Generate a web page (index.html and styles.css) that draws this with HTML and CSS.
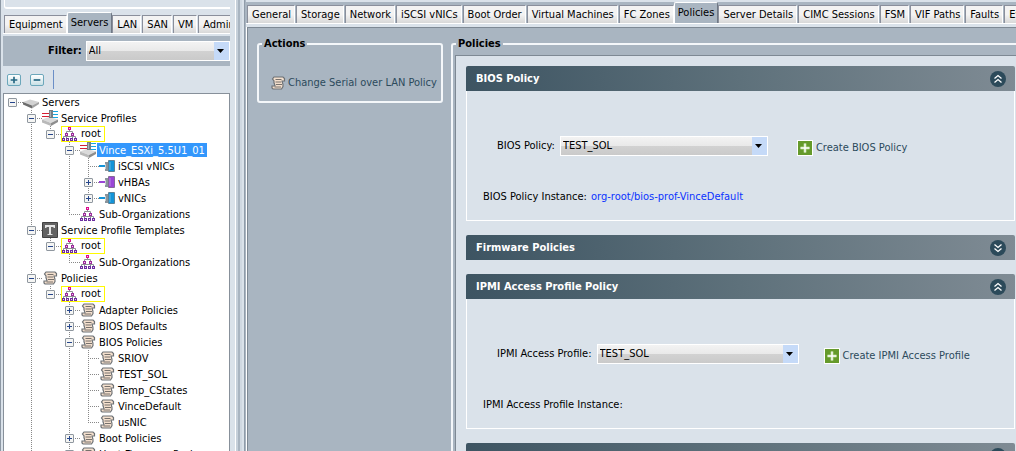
FILE: index.html
```html
<!DOCTYPE html>
<html lang="en">
<head>
<meta charset="utf-8">
<title>Servers - Policies</title>
<link rel="stylesheet" href="styles.css">
</head>
<body>
<svg class="defs" aria-hidden="true">
  <symbol id="scroll" viewBox="0 0 16 16">
    <path d="M4 2H13L14.500 3.500V6H12C12 7.500 13.500 8.500 13 11.500L11.500 14H3L2 13V11H5C5 9.500 3.500 8.500 4 6L2.500 4Z" fill="#f3dfcd" stroke="#6d7175" stroke-width="1.200"/>
    <path d="M5.500 4.500H11.500M5.500 7H11M6 9.500H12M4.500 12H11" stroke="#77716c" stroke-width="1" fill="none"/>
  </symbol>
  <symbol id="org" viewBox="0 0 16 16">
    <path d="M7.500 4V5.500M4.500 7V5.500H10.500V7M1.500 12V10.500H13.500V12M4.500 9V12M10.500 9V12" stroke="#8d9095" fill="none"/>
    <path d="M6 1h3v3H6z" fill="#d80f8c"/>
    <path d="M3 7h3v3H3zM9 7h3v3H9z" fill="#9c2c9c"/>
    <path d="M0 12h3v3H0zM4 12h3v3H4zM8 12h3v3H8zM12 12h3v3h-3z" fill="#6b2fa0"/>
    <path d="M7 2h1v1H7zM4 8h1v1H4zM10 8h1v1h-1zM1 13h1v1H1zM5 13h1v1H5zM9 13h1v1H9zM13 13h1v1h-1z" fill="#f3c6ee"/>
  </symbol>
  <symbol id="server" viewBox="0 0 16 16">
    <path d="M0 8L7 5.500L16 8L9 11.500Z" fill="#d2d2d2"/>
    <path d="M0 8L9 11.500V14.500L0 10.500Z" fill="#6d6d6d"/>
    <path d="M9 11.500L16 8V10L9 14.500Z" fill="#a2a2a2"/>
  </symbol>
  <symbol id="profile" viewBox="0 0 16 16">
    <path d="M0 9.500L7 7L16 9.500L9 13Z" fill="#dadada"/>
    <path d="M0 9.500L9 13V16L0 12.500Z" fill="#b9b9b9"/>
    <path d="M9 13L16 9.500V12L9 16Z" fill="#8d8d8d"/>
    <path d="M0 3.500H7M0 6.500H7" stroke="#d61f34"/>
    <path d="M10 1.500H16M10 4.500H16M10 7.500H16" stroke="#17a6e0"/>
    <path d="M7 0h4v8H7z" fill="#777e84"/><path d="M8 1h1v6H8z" fill="#a9afb3"/>
  </symbol>
  <symbol id="nic" viewBox="0 0 16 16">
    <path d="M0 8H6" stroke="currentColor" stroke-width="2"/>
    <path d="M6 4h3v9H6z" fill="#8b949b"/><path d="M6 6h1v5H6z" fill="#c5cacd"/>
    <path d="M9.500 2.500H15.500V13.500H9.500Z" fill="currentColor" stroke="#000" stroke-opacity=".35"/>
    <path d="M11 4v8" stroke="#fff" stroke-opacity=".35"/>
  </symbol>
  <symbol id="template" viewBox="0 0 16 16">
    <path d="M.5.5h15v15H.5z" fill="#636363" stroke="#424242"/>
    <path d="M3 3h10v3h-1.500V5H9v7h1.500v1h-5v-1H7V5H4.500v1H3z" fill="#e6e6e6"/>
  </symbol>
  <symbol id="up" viewBox="0 0 16 16">
    <circle cx="8" cy="8" r="8" fill="#2c4a5a"/>
    <path d="M4.500 7.500L8 4.500L11.500 7.500M4.500 11.500L8 8.500L11.500 11.500" fill="none" stroke="#fff" stroke-width="1.300"/>
  </symbol>
  <symbol id="down" viewBox="0 0 16 16">
    <circle cx="8" cy="8" r="8" fill="#2c4a5a"/>
    <path d="M4.500 4.500L8 7.500L11.500 4.500M4.500 8.500L8 11.500L11.500 8.500" fill="none" stroke="#fff" stroke-width="1.300"/>
  </symbol>
  <symbol id="add" viewBox="0 0 16 16">
    <path d="M0 0h16v16H0z" fill="#fff"/><path d="M1 1h14v14H1z" fill="#659a2b"/>
    <path d="M8 3.500V12.500M3.500 8H12.500" stroke="#a6cc7c" stroke-width="3"/>
    <path d="M8 3.500V12.500M3.500 8H12.500" stroke="#fff" stroke-width="1.400"/>
  </symbol>
</svg>

<div class="app">
  <aside class="sidebar">
    <div class="summary"></div>
    <nav class="tabs side-tabs">
      <button class="tab">Equipment</button>
      <button class="tab active">Servers</button>
      <button class="tab">LAN</button>
      <button class="tab">SAN</button>
      <button class="tab">VM</button>
      <button class="tab">Admin</button>
    </nav>
    <div class="filter">
      <label for="filter">Filter:</label>
      <select id="filter"><option>All</option></select>
    </div>
    <div class="toolbar">
      <button class="tool" aria-label="Expand all"><svg viewBox="0 0 14 12"><path d="M7 2v8M3 6h8" stroke="#266783" stroke-width="2"/></svg></button>
      <button class="tool" aria-label="Collapse all"><svg viewBox="0 0 14 12"><path d="M3 6h8" stroke="#266783" stroke-width="2"/></svg></button>
      <span class="divider"></span>
    </div>
    <div class="tree">
      <ul>
        <li><div class="row"><button class="toggle" aria-label="Collapse"></button><svg class="icon"><use href="#server"/></svg><span class="name">Servers</span></div>
          <ul>
            <li><div class="row"><button class="toggle" aria-label="Collapse"></button><svg class="icon"><use href="#profile"/></svg><span class="name">Service Profiles</span></div>
              <ul>
                <li><div class="row"><button class="toggle" aria-label="Collapse"></button><span class="root"><svg class="icon"><use href="#org"/></svg>root</span></div>
                  <ul>
                    <li><div class="row"><button class="toggle" aria-label="Collapse"></button><svg class="icon"><use href="#profile"/></svg><span class="name selected">Vince_ESXi_5.5U1_01</span></div>
                      <ul>
                        <li><div class="row leaf"><svg class="icon blue"><use href="#nic"/></svg><span class="name">iSCSI vNICs</span></div></li>
                        <li><div class="row"><button class="toggle plus" aria-label="Expand"></button><svg class="icon purple"><use href="#nic"/></svg><span class="name">vHBAs</span></div></li>
                        <li><div class="row"><button class="toggle plus" aria-label="Expand"></button><svg class="icon blue"><use href="#nic"/></svg><span class="name">vNICs</span></div></li>
                      </ul>
                    </li>
                    <li><div class="row leaf"><svg class="icon"><use href="#org"/></svg><span class="name">Sub-Organizations</span></div></li>
                  </ul>
                </li>
              </ul>
            </li>
            <li><div class="row"><button class="toggle" aria-label="Collapse"></button><svg class="icon"><use href="#template"/></svg><span class="name">Service Profile Templates</span></div>
              <ul>
                <li><div class="row"><button class="toggle" aria-label="Collapse"></button><span class="root"><svg class="icon"><use href="#org"/></svg>root</span></div>
                  <ul>
                    <li><div class="row leaf"><svg class="icon"><use href="#org"/></svg><span class="name">Sub-Organizations</span></div></li>
                  </ul>
                </li>
              </ul>
            </li>
            <li class="more"><div class="row"><button class="toggle" aria-label="Collapse"></button><svg class="icon"><use href="#scroll"/></svg><span class="name">Policies</span></div>
              <ul>
                <li><div class="row"><button class="toggle" aria-label="Collapse"></button><span class="root"><svg class="icon"><use href="#org"/></svg>root</span></div>
                  <ul>
                    <li><div class="row"><button class="toggle plus" aria-label="Expand"></button><svg class="icon"><use href="#scroll"/></svg><span class="name">Adapter Policies</span></div></li>
                    <li><div class="row"><button class="toggle plus" aria-label="Expand"></button><svg class="icon"><use href="#scroll"/></svg><span class="name">BIOS Defaults</span></div></li>
                    <li><div class="row"><button class="toggle" aria-label="Collapse"></button><svg class="icon"><use href="#scroll"/></svg><span class="name">BIOS Policies</span></div>
                      <ul>
                        <li><div class="row leaf"><svg class="icon"><use href="#scroll"/></svg><span class="name">SRIOV</span></div></li>
                        <li><div class="row leaf"><svg class="icon"><use href="#scroll"/></svg><span class="name">TEST_SOL</span></div></li>
                        <li><div class="row leaf"><svg class="icon"><use href="#scroll"/></svg><span class="name">Temp_CStates</span></div></li>
                        <li><div class="row leaf"><svg class="icon"><use href="#scroll"/></svg><span class="name">VinceDefault</span></div></li>
                        <li><div class="row leaf"><svg class="icon"><use href="#scroll"/></svg><span class="name">usNIC</span></div></li>
                      </ul>
                    </li>
                    <li><div class="row"><button class="toggle plus" aria-label="Expand"></button><svg class="icon"><use href="#scroll"/></svg><span class="name">Boot Policies</span></div></li>
                    <li class="more"><div class="row"><button class="toggle plus" aria-label="Expand"></button><svg class="icon"><use href="#scroll"/></svg><span class="name">Host Firmware Packages</span></div></li>
                  </ul>
                </li>
              </ul>
            </li>
          </ul>
        </li>
      </ul>
    </div>
  </aside>
  <div class="splitter"></div>
  <main class="main">
    <nav class="tabs main-tabs">
      <button class="tab">General</button>
      <button class="tab">Storage</button>
      <button class="tab">Network</button>
      <button class="tab">iSCSI vNICs</button>
      <button class="tab">Boot Order</button>
      <button class="tab">Virtual Machines</button>
      <button class="tab">FC Zones</button>
      <button class="tab active">Policies</button>
      <button class="tab">Server Details</button>
      <button class="tab">CIMC Sessions</button>
      <button class="tab">FSM</button>
      <button class="tab">VIF Paths</button>
      <button class="tab">Faults</button>
      <button class="tab">Events</button>
    </nav>
    <div class="content">
      <fieldset class="group actions">
        <legend>Actions</legend>
        <button class="action"><svg class="icon"><use href="#scroll"/></svg>Change Serial over LAN Policy</button>
      </fieldset>
      <fieldset class="group policies">
        <legend>Policies</legend>
        <div class="scroller">
          <section class="panel">
            <h2>BIOS Policy<button class="fold" aria-label="Collapse"><svg><use href="#up"/></svg></button></h2>
            <div class="body">
              <div class="field">
                <label for="bios">BIOS Policy:</label>
                <select id="bios"><option>TEST_SOL</option></select>
                <button class="action create"><svg class="icon"><use href="#add"/></svg>Create BIOS Policy</button>
              </div>
              <div class="instance">BIOS Policy Instance: <a href="#bios">org-root/bios-prof-VinceDefault</a></div>
            </div>
          </section>
          <section class="panel">
            <h2>Firmware Policies<button class="fold" aria-label="Expand"><svg><use href="#down"/></svg></button></h2>
          </section>
          <section class="panel">
            <h2>IPMI Access Profile Policy<button class="fold" aria-label="Collapse"><svg><use href="#up"/></svg></button></h2>
            <div class="body">
              <div class="field compact">
                <label for="ipmi">IPMI Access Profile:</label>
                <select id="ipmi"><option>TEST_SOL</option></select>
                <button class="action create"><svg class="icon"><use href="#add"/></svg>Create IPMI Access Profile</button>
              </div>
              <div class="instance">IPMI Access Profile Instance:</div>
            </div>
          </section>
          <section class="panel">
            <h2>Power Control Policy<button class="fold" aria-label="Collapse"><svg><use href="#up"/></svg></button></h2>
          </section>
        </div>
      </fieldset>
    </div>
  </main>
</div>
</body>
</html>
```

FILE: styles.css
```css
* { box-sizing: border-box; }

body {
  margin: 0;
  background: #dae2ea;
  color: #000;
  font: 11px/16px "DejaVu Sans Condensed", "Noto Sans", sans-serif;
}

button, select {
  font: inherit;
  color: inherit;
  margin: 0;
  padding: 0;
  border: 0;
  background: none;
}

ul { list-style: none; margin: 0; padding: 0; }
.defs { display: none; }
.icon { width: 16px; height: 16px; flex: none; display: block; }

.app { display: flex; height: 100vh; overflow: hidden; }

/* Sidebar */
.sidebar {
  flex: none;
  width: 230px;
  display: flex;
  flex-direction: column;
  overflow: hidden;
  border-left: 1px solid #8d98a4;
  padding-left: 2px;
}
.summary {
  height: 9px;
  flex: none;
  margin-left: 1px;
  border: solid #fff;
  border-width: 0 0 2px 1px;
  border-radius: 0 0 0 3px;
}

.tabs { display: flex; align-items: flex-end; flex: none; overflow: hidden; gap: 1px; }
.tab {
  flex: none;
  height: 18px;
  padding: 0 3px 0 4px;
  border: 1px solid #fff;
  border-top-color: #8a8f9c;
  border-left-color: #8a8f9c;
  border-bottom: 0;
  background: linear-gradient(#f3f3f3 50%, #d8d8d8);
  white-space: nowrap;
}
.tab.active {
  height: 21px;
  margin: 0 -1px;
  padding: 0 3px 1px;
  border: 1px solid #fff;
  border-right-color: #6f7884;
  border-bottom: 0;
  border-radius: 2px 2px 0 0;
  background: #a9b5c1;
}
.side-tabs { height: 25px; padding-left: 1px; border-bottom: 1px solid #fff; }

.filter {
  flex: none;
  display: flex;
  align-items: center;
  gap: 4px;
  height: 30px;
  margin-top: 2px;
  padding-left: 45px;
  background: #a9b5c1;
  overflow: hidden;
}
.filter label { font-weight: bold; }
.filter select { flex: 1; }

select {
  appearance: none;
  height: 20px;
  padding-left: 2px;
  border: 1px solid #fff;
  background:
    url("data:image/svg+xml,%3Csvg xmlns='http://www.w3.org/2000/svg' width='15' height='18'%3E%3Cpath d='M0 0h15v18H0z' fill='%23c5daf8'/%3E%3Cpath d='M3 7h7L6.500 11z'/%3E%3C/svg%3E") right / 15px 18px no-repeat,
    linear-gradient(#f3f3f3, #e9e9e9 50%, #d2d2d2 50%, #cacaca);
}

.toolbar { flex: none; display: flex; align-items: center; height: 27px; gap: 9px; padding-left: 4px; }
.tool { width: 14px; height: 12px; border: 1px solid #6ca7bb; border-radius: 2px; background: linear-gradient(#fff, #c9e0e6); }
.tool svg { display: block; width: 100%; height: 100%; }
.divider { width: 1px; height: 19px; background: #6b8fc7; }

/* Navigation tree */
.tree { flex: 1; min-height: 0; overflow: hidden; background: #fff; border: 1px solid #87909a; border-bottom: 0; }
.tree > ul { padding-left: 4px; }
.tree ul ul { padding-left: 19px; }
.tree ul ul > li {
  background: repeating-linear-gradient(#888 0 1px, transparent 1px 2px) 4px 0 / 1px 100% no-repeat;
}
.tree ul ul > li:last-child:not(.more) { background-size: 1px 8px; }
.row {
  display: flex;
  align-items: center;
  height: 16px;
  background: repeating-linear-gradient(90deg, #888 0 1px, transparent 1px 2px) 4px 8px / 12px 1px no-repeat;
}
.row.leaf { padding-left: 15px; }
.toggle {
  flex: none;
  width: 9px;
  height: 9px;
  margin-right: 6px;
  border: 1px solid #8f979f;
  border-radius: 1px;
  background: linear-gradient(#26468c, #26468c) center / 5px 1px no-repeat, #f5f5f3;
}
.toggle.plus {
  background:
    linear-gradient(#26468c, #26468c) center / 5px 1px no-repeat,
    linear-gradient(#26468c, #26468c) center / 1px 5px no-repeat,
    #f5f5f3;
}
.name { padding: 0 2px; height: 14px; line-height: 16px; margin-left: 1px; white-space: nowrap; }
.selected { background: #3397fc; color: #fff; }
.root {
  display: flex;
  align-items: center;
  gap: 3px;
  height: 16px;
  padding: 0 3px 0 0;
  border: 1px solid #fffa00;
  line-height: 18px;
}

.blue { color: #1494d8; }
.purple { color: #9a45d6; }

/* Divider between sidebar and main area */
.splitter {
  flex: none;
  width: 16px;
  background: linear-gradient(90deg, #dae2ea 5px, #fff 5px 6px, #c6d0da 6px 8px, #a9b5c1 8px 10px, #cfd8e1 10px 12px, #dae2ea 12px 14px, #8f9ba8 14px 15px, #a9b5c1 15px);
}

/* Main area */
.main { flex: 1; min-width: 0; display: flex; flex-direction: column; }
.main-tabs {
  height: 24px;
  padding-left: 1px;
  border-top: 2px solid #dae2ea;
  border-bottom: 1px solid #fff;
  background: #a9b5c1;
}
.content {
  flex: 1;
  min-height: 0;
  display: flex;
  align-items: flex-start;
  gap: 8px;
  margin: 3px 0 0 1px;
  padding: 8px 0 0 9px;
  border-top: 1px solid #7e8994;
  border-left: 1px solid #7e8994;
  background: #a9b5c1;
  box-shadow: -1px 0 #fff;
}
.group { min-width: 0; margin: 0; padding: 0; border: 2px solid #f4f7fa; border-radius: 3px; }
.group legend { margin-left: 3px; padding: 0 2px; font-weight: bold; line-height: 16px; }
.actions { flex: none; width: 186px; height: 67px; }
.action { display: flex; align-items: center; gap: 2px; color: #2c4a5c; white-space: nowrap; }
.actions .action { margin: 23px 0 0 11px; }
.policies { flex: 1; border-right: 0; border-bottom: 0; border-radius: 3px 0 0; }
.scroller {
  padding: 10px 1px 0 10px;
  margin: 3px 0 0 2px;
  border-top: 1px solid #7e8994;
  border-left: 1px solid #7e8994;
  background: #dae2ea;
  display: flex;
  flex-direction: column;
  gap: 14px;
}
.panel h2 {
  display: flex;
  align-items: center;
  justify-content: space-between;
  height: 25px;
  margin: 0;
  padding: 0 9px 0 10px;
  border-radius: 2px 2px 0 0;
  background: linear-gradient(80deg, #3d5462, #5e717b 50%, #7f8b94);
  color: #fff;
  font-size: 11px;
}
.fold, .fold svg { display: block; width: 16px; height: 16px; }
.body { border: 1px solid #fff; border-top: 0; padding: 45px 16px 15px; }
.field { display: flex; align-items: center; gap: 5px; padding-left: 14px; }
.field select { width: 208px; }
.create { gap: 3px; margin-left: 24px; padding-top: 4px; }
.compact select { width: 202px; }
.compact .create { margin-left: 20px; }
.instance { margin-top: 33px; }
.instance a { color: #0a32ff; text-decoration: none; margin-left: 1px; }
```
